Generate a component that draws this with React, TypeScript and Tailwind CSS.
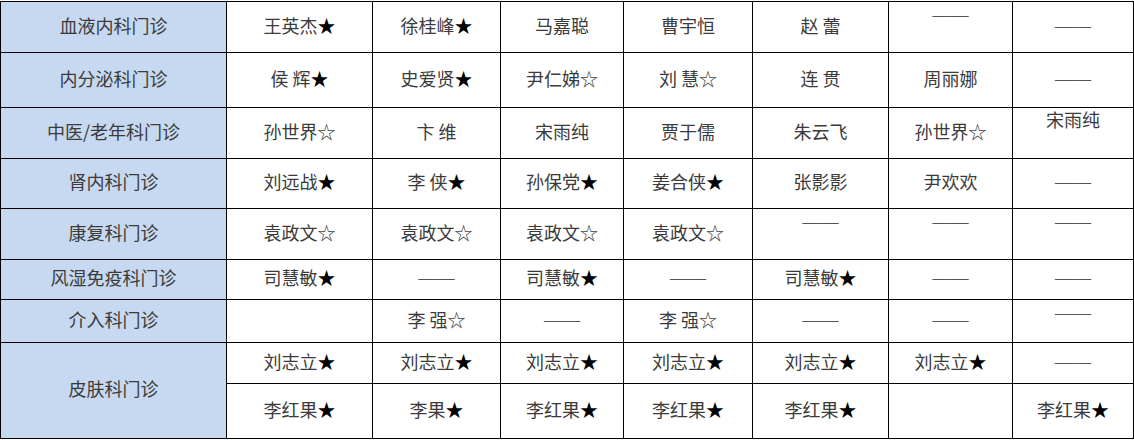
// Outpatient clinic duty roster table

type Cell = { text: string; top?: boolean };

const widths = [226, 146, 128, 123, 129, 136, 124, 121];

const rows: { dept?: string; span?: number; h: string; cells: Cell[] }[] = [
  {
    dept: '血液内科门诊',
    h: 'h-[51px]',
    cells: [
      { text: '王英杰★' },
      { text: '徐桂峰★' },
      { text: '马嘉聪' },
      { text: '曹宇恒' },
      { text: '赵 蕾' },
      { text: '——', top: true },
      { text: '——' },
    ],
  },
  {
    dept: '内分泌科门诊',
    h: 'h-[55px]',
    cells: [
      { text: '侯 辉★' },
      { text: '史爱贤★' },
      { text: '尹仁娣☆' },
      { text: '刘 慧☆' },
      { text: '连 贯' },
      { text: '周丽娜' },
      { text: '——' },
    ],
  },
  {
    dept: '中医/老年科门诊',
    h: 'h-[51px]',
    cells: [
      { text: '孙世界☆' },
      { text: '卞 维' },
      { text: '宋雨纯' },
      { text: '贾于儒' },
      { text: '朱云飞' },
      { text: '孙世界☆' },
      { text: '宋雨纯', top: true },
    ],
  },
  {
    dept: '肾内科门诊',
    h: 'h-[50px]',
    cells: [
      { text: '刘远战★' },
      { text: '李 侠★' },
      { text: '孙保党★' },
      { text: '姜合侠★' },
      { text: '张影影' },
      { text: '尹欢欢' },
      { text: '——' },
    ],
  },
  {
    dept: '康复科门诊',
    h: 'h-[51px]',
    cells: [
      { text: '袁政文☆' },
      { text: '袁政文☆' },
      { text: '袁政文☆' },
      { text: '袁政文☆' },
      { text: '——', top: true },
      { text: '——', top: true },
      { text: '——', top: true },
    ],
  },
  {
    dept: '风湿免疫科门诊',
    h: 'h-[40px]',
    cells: [
      { text: '司慧敏★' },
      { text: '——' },
      { text: '司慧敏★' },
      { text: '——' },
      { text: '司慧敏★' },
      { text: '——' },
      { text: '——' },
    ],
  },
  {
    dept: '介入科门诊',
    h: 'h-[43px]',
    cells: [
      { text: '' },
      { text: '李 强☆' },
      { text: '——' },
      { text: '李 强☆' },
      { text: '——' },
      { text: '——' },
      { text: '——', top: true },
    ],
  },
  {
    dept: '皮肤科门诊',
    span: 2,
    h: 'h-[41px]',
    cells: [
      { text: '刘志立★' },
      { text: '刘志立★' },
      { text: '刘志立★' },
      { text: '刘志立★' },
      { text: '刘志立★' },
      { text: '刘志立★' },
      { text: '——' },
    ],
  },
  {
    h: 'h-[55px]',
    cells: [
      { text: '李红果★' },
      { text: '李果★' },
      { text: '李红果★' },
      { text: '李红果★' },
      { text: '李红果★' },
      { text: '' },
      { text: '李红果★' },
    ],
  },
];

function Name({ text }: { text: string }) {
  if (text === '——') {
    return <span className="font-['Liberation_Serif',serif] text-[#555]">——</span>;
  }
  const star = text.endsWith('★');
  const body = star ? text.slice(0, -1) : text;
  return (
    <>
      {body}
      {star && <span className="text-black">★</span>}
    </>
  );
}

export default function App() {
  return (
    <div className="w-[1134px] h-[440px] bg-white pt-px font-['Noto_Sans_CJK_SC','Noto_Sans',sans-serif] text-[18px] leading-[20px] text-[#3b3b3b]">
      <table className="table-fixed border-collapse w-[1133px]">
        <colgroup>
          {widths.map((w, i) => (
            <col key={i} style={{ width: w }} />
          ))}
        </colgroup>
        <tbody>
          {rows.map((row, ri) => (
            <tr key={ri} className={row.h}>
              {row.dept && (
                <td
                  rowSpan={row.span ?? 1}
                  className="border border-black bg-[#c6d9f0] text-center align-middle p-0 pb-[5px]"
                >
                  {row.dept}
                </td>
              )}
              {row.cells.map((c, ci) => (
                <td
                  key={ci}
                  className={`border border-black text-center p-0 ${c.top ? 'align-top pt-px' : 'align-middle pb-[5px]'}`}
                >
                  <Name text={c.text} />
                </td>
              ))}
            </tr>
          ))}
        </tbody>
      </table>
    </div>
  );
}
